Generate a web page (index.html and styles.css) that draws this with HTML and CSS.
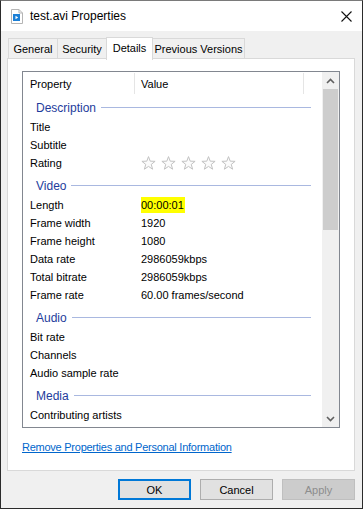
FILE: index.html
```html
<!DOCTYPE html>
<html>
<head>
<meta charset="utf-8">
<link rel="stylesheet" href="styles.css">
</head>
<body>
<div class="window">
  <div class="titlebar">
    <svg class="ticon" width="12" height="15" viewBox="0 0 12 15">
      <path d="M0.5 0.5 H8 L11.5 4 V14.5 H0.5 Z" fill="#fff" stroke="#b5b5b5"/>
      <path d="M8 0.5 V4 H11.5" fill="none" stroke="#b5b5b5"/>
      <rect x="2" y="5" width="7" height="7" fill="#1b7fd6"/>
      <path d="M4.5 6.8 L7.2 8.5 L4.5 10.2 Z" fill="#fff"/>
    </svg>
    <span class="ttext">test.avi Properties</span>
    <svg class="close" width="11" height="11" viewBox="0 0 11 11">
      <path d="M0.5 0.5 L10.5 10.5 M10.5 0.5 L0.5 10.5" stroke="#111" stroke-width="1.1"/>
    </svg>
  </div>
  <div class="content">
    <div class="tabs">
      <div class="tab t-gen">General</div>
      <div class="tab t-sec">Security</div>
      <div class="tab t-det active">Details</div>
      <div class="tab t-prev">Previous Versions</div>
    </div>
    <div class="panel">
      <div class="listbox">
        <div class="list">
          <div class="hdr">
            <div class="hcol h1">Property</div>
            <div class="hcol h2">Value</div>
          </div>
          <div class="group"><span>Description</span><i></i></div>
          <div class="row"><div class="k">Title</div><div class="v"></div></div>
          <div class="row"><div class="k">Subtitle</div><div class="v"></div></div>
          <div class="row"><div class="k">Rating</div><div class="v stars">
            <svg width="100" height="15" viewBox="0 0 100 15">
              <defs><path id="st" d="M7.5 0.6 L9.2 5.15 L14.1 5.34 L10.26 8.4 L11.6 13.2 L7.5 10.4 L3.4 13.2 L4.74 8.4 L0.9 5.34 L5.8 5.15 Z" fill="#fbfbfb" stroke="#c2c2c2" stroke-width="1"/></defs>
              <use href="#st" x="0"/><use href="#st" x="20"/><use href="#st" x="40"/><use href="#st" x="60"/><use href="#st" x="80"/>
            </svg>
          </div></div>
          <div class="group"><span>Video</span><i></i></div>
          <div class="row"><div class="k">Length</div><div class="v"><span class="hl">00:00:01</span></div></div>
          <div class="row"><div class="k">Frame width</div><div class="v">1920</div></div>
          <div class="row"><div class="k">Frame height</div><div class="v">1080</div></div>
          <div class="row"><div class="k">Data rate</div><div class="v">2986059kbps</div></div>
          <div class="row"><div class="k">Total bitrate</div><div class="v">2986059kbps</div></div>
          <div class="row"><div class="k">Frame rate</div><div class="v">60.00 frames/second</div></div>
          <div class="group"><span>Audio</span><i></i></div>
          <div class="row"><div class="k">Bit rate</div><div class="v"></div></div>
          <div class="row"><div class="k">Channels</div><div class="v"></div></div>
          <div class="row"><div class="k">Audio sample rate</div><div class="v"></div></div>
          <div class="group"><span>Media</span><i></i></div>
          <div class="row"><div class="k">Contributing artists</div><div class="v"></div></div>
        </div>
        <div class="scrollbar">
          <div class="arrow">
            <svg width="9" height="6" viewBox="0 0 9 6"><path d="M1 5 L4.5 1.5 L8 5" fill="none" stroke="#606060" stroke-width="1.6"/></svg>
          </div>
          <div class="track"><div class="thumb"></div></div>
          <div class="arrow">
            <svg width="9" height="6" viewBox="0 0 9 6"><path d="M1 1 L4.5 4.5 L8 1" fill="none" stroke="#606060" stroke-width="1.6"/></svg>
          </div>
        </div>
      </div>
      <div class="linkrow"><a class="link">Remove Properties and Personal Information</a></div>
    </div>
    <div class="buttons">
      <div class="btn ok">OK</div>
      <div class="btn">Cancel</div>
      <div class="btn disabled">Apply</div>
    </div>
  </div>
</div>
</body>
</html>
```
FILE: styles.css
```css
html, body {
  margin: 0;
  padding: 0;
  background: #2a2a2a;
}
.window {
  width: 363px;
  height: 509px;
  box-sizing: border-box;
  border: 1px solid #2b2b2b;
  border-top-color: #7a7a7a;
  background: #f0f0f0;
  display: flex;
  flex-direction: column;
  font-family: "Liberation Sans", Arial, sans-serif;
  font-size: 11px;
  color: #000;
}
.titlebar {
  height: 30px;
  background: #fff;
  display: flex;
  align-items: center;
  padding-left: 10px;
  flex: none;
}
.ticon { flex: none; margin-top: 1px; }
.ttext {
  margin-left: 7px;
  font-size: 12px;
  color: #000;
}
.close {
  margin-left: auto;
  margin-right: 10px;
}
.content {
  flex: 1;
  display: flex;
  flex-direction: column;
  padding: 7px 7px 0 6px;
}
.tabs {
  display: flex;
  align-items: flex-end;
  height: 20px;
  padding-left: 1px;
}
.tab {
  height: 20px;
  box-sizing: border-box;
  border: 1px solid #d9d9d9;
  border-bottom: none;
  border-left: none;
  background: #f0f0f0;
  display: flex;
  align-items: center;
  justify-content: center;
  white-space: nowrap;
  color: #000;
}
.t-gen { width: 50px; border-left: 1px solid #d9d9d9; }
.t-sec { width: 49px; }
.t-det { width: 47px; }
.t-prev { width: 92px; }
.tab.active {
  height: 23px;
  margin-bottom: -2px;
  background: #fff;
  border-left: 1px solid #d9d9d9;
  margin-left: -1px;
  position: relative;
  z-index: 2;
  align-items: flex-start;
  padding-top: 4px;
}
.panel {
  height: 413px;
  box-sizing: border-box;
  border: 1px solid #d9d9d9;
  background: #fff;
  padding: 12px 14px 0 14px;
  display: flex;
  flex-direction: column;
  position: relative;
  z-index: 1;
}
.listbox {
  height: 357px;
  box-sizing: border-box;
  border: 1px solid #828790;
  display: flex;
  background: #fff;
}
.list {
  flex: 1;
  overflow: hidden;
}
.hdr {
  height: 22px;
  display: flex;
  align-items: stretch;
}
.hcol {
  display: flex;
  align-items: center;
  box-sizing: border-box;
  border-right: 1px solid #e5e5e5;
  margin: 1px 0 0 0;
}
.h1 { width: 112px; padding-left: 7px; }
.h2 { width: 169px; padding-left: 6px; }
.group {
  height: 24px;
  display: flex;
  align-items: center;
  padding-left: 13px;
  padding-right: 11px;
  padding-top: 3px;
  box-sizing: border-box;
  color: #1e3c9c;
  font-size: 12px;
}
.group i {
  flex: 1;
  height: 1px;
  background: #a9b8e0;
  margin-left: 5px;
  margin-top: 0;
}
.row {
  height: 18px;
  display: flex;
  align-items: center;
}
.k {
  width: 112px;
  padding-left: 7px;
  box-sizing: border-box;
  white-space: nowrap;
}
.v {
  padding-left: 6px;
  white-space: nowrap;
}
.stars { display: flex; align-items: center; padding-left: 6px; }
.stars svg { display: block; }
.hl {
  background: #ffff00;
  padding: 2px 1px 2px 0;
}
.scrollbar {
  width: 17px;
  background: #f0f0f0;
  display: flex;
  flex-direction: column;
  flex: none;
}
.arrow {
  height: 17px;
  display: flex;
  align-items: center;
  justify-content: center;
  flex: none;
}
.track {
  flex: 1;
  padding: 0 1px;
}
.thumb {
  height: 141px;
  background: #cdcdcd;
}
.linkrow {
  margin-top: 11px;
  height: 16px;
  display: flex;
  align-items: center;
}
.link {
  color: #0066cc;
  text-decoration: underline;
  letter-spacing: -0.25px;
  cursor: pointer;
}
.buttons {
  display: flex;
  justify-content: flex-end;
  gap: 9px;
  margin-top: 8px;
}
.btn {
  width: 73px;
  height: 21px;
  box-sizing: border-box;
  border: 1px solid #adadad;
  background: #e1e1e1;
  display: flex;
  align-items: center;
  justify-content: center;
}
.btn.ok {
  border: 2px solid #0078d7;
}
.btn.disabled {
  background: #cccccc;
  border-color: #bfbfbf;
  color: #8d8d8d;
}
```
